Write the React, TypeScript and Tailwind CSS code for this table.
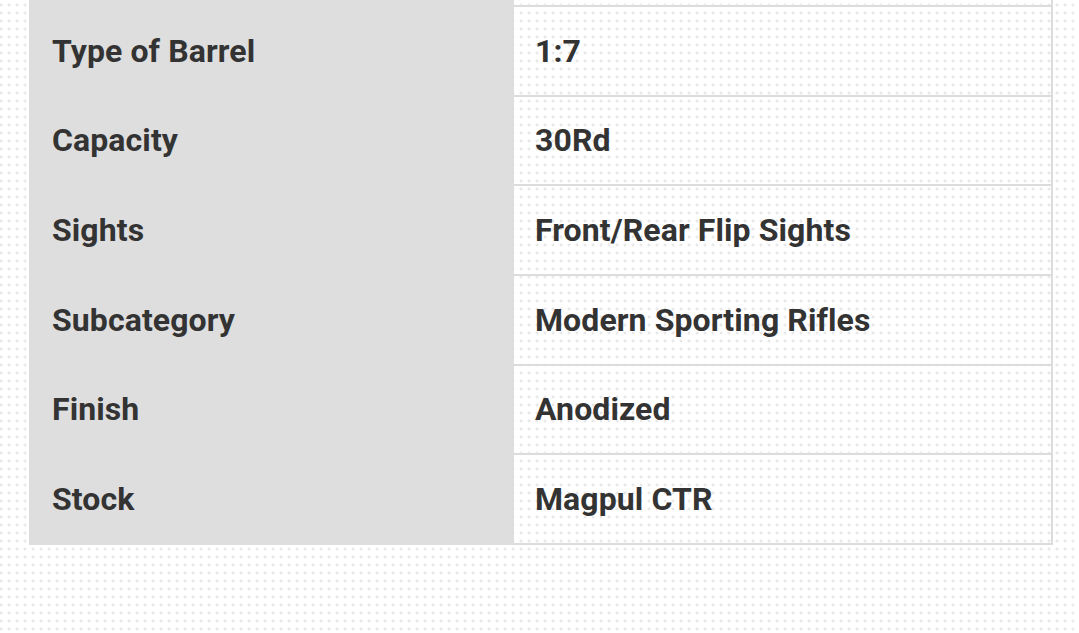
import React from 'react';

interface SpecRow {
  label: string;
  value: string;
}

const specs: SpecRow[] = [
  { label: 'Type of Barrel', value: '1:7' },
  { label: 'Capacity', value: '30Rd' },
  { label: 'Sights', value: 'Front/Rear Flip Sights' },
  { label: 'Subcategory', value: 'Modern Sporting Rifles' },
  { label: 'Finish', value: 'Anodized' },
  { label: 'Stock', value: 'Magpul CTR' },
];

const App: React.FC = () => {
  return (
    <div
      className="min-h-screen w-full overflow-hidden bg-white bg-[radial-gradient(circle,#e8e8e8_1.2px,transparent_1.8px)] bg-[length:8px_8px] bg-[position:-3px_1px]"
      style={{ fontFamily: 'Roboto, "Liberation Sans", sans-serif' }}
    >
      <div className="ml-[29px] w-[1024px] border-r-2 border-[#dcdcdc]">
        {/* tail of the row above, scrolled out of view */}
        <div className="flex h-[7px]">
          <div className="w-[485px] bg-[#dedede]" />
          <div className="flex-1 border-b-2 border-[#dcdcdc]" />
        </div>
        {specs.map((row) => (
          <div key={row.label} className="flex h-[89.67px]">
            <div className="flex w-[485px] items-center bg-[#dedede] pb-[2px] pl-[23px] text-[32px] font-bold tracking-[0.1px] text-[#333333]">
              {row.label}
            </div>
            <div className="flex flex-1 items-center border-b-2 border-[#dcdcdc] pl-[21px] text-[32px] font-bold tracking-[0.1px] text-[#333333]">
              {row.value}
            </div>
          </div>
        ))}
      </div>
    </div>
  );
};

export default App;
